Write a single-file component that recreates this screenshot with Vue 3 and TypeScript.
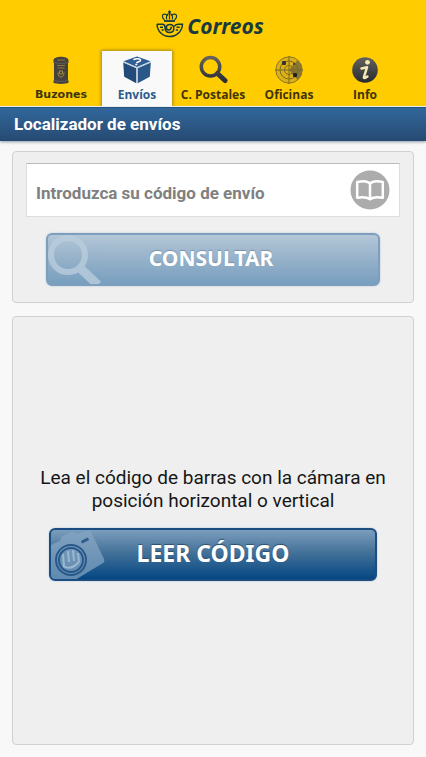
<script setup lang="ts">
import { ref } from 'vue'

type TabId = 'mailbox' | 'parcel' | 'search' | 'radar' | 'info'

interface Tab {
  id: TabId
  label: string
}

const tabs: Tab[] = [
  { id: 'mailbox', label: 'Buzones' },
  { id: 'parcel', label: 'Envíos' },
  { id: 'search', label: 'C. Postales' },
  { id: 'radar', label: 'Oficinas' },
  { id: 'info', label: 'Info' },
]

const activeTab = ref<TabId>('parcel')
const code = ref('')
</script>

<template>
  <div class="app">
    <header class="brand">
      <svg class="brand-mark" viewBox="0 0 28 28" aria-hidden="true" fill="none" stroke="#17393f">
        <path d="M13.5 0.5v3M12 1.8h3" stroke-width="1.3" />
        <path d="M8.500 10C4.800 6.500 6.500 3.800 9 4.200c1.800.2 2.500 1 2.800 1.800M18.500 10c3.700-3.500 2-6.200-.5-5.800-1.800.2-2.500 1-2.800 1.800M10.800 9.500C9.500 6 11.500 3.500 13.500 3.500s4 2.500 2.700 6M13.500 4v5.500" stroke-width="1.200" />
        <path d="M8 11h11" stroke-width="1.800" />
        <path d="M1 14.200h5.500c2 0 2.500 1.200 2.500 3 0 3.500 1.800 5.300 4.500 5.300 2.500 0 4.300-1.700 4.300-4s-1.600-3.900-3.900-3.900c-2.200 0-3.500 1.300-3.500 3s1 2.400 2.200 2.400c1.600 0 2.600-1.300 2.700-3.300" stroke-width="1.500" />
        <path d="M1 14.200C1.500 21.500 6.500 26.500 13.500 26.500S26 21.500 26.500 14.200H22c-2 0-3 .6-3.800 2.300M4 17.200h3M20.500 17.200h3.200M5.500 20h2.200M19.800 20H22" stroke-width="1.500" />
      </svg>
      <span class="brand-name">Correos</span>
    </header>

    <nav class="tabs" aria-label="Secciones">
      <button
        v-for="tab in tabs"
        :key="tab.id"
        type="button"
        class="tab"
        :class="[tab.id, { active: tab.id === activeTab }]"
        :aria-current="tab.id === activeTab ? 'page' : undefined"
        @click="activeTab = tab.id"
      >
        <svg class="tab-icon" viewBox="0 0 30 30" aria-hidden="true">
          <defs>
            <linearGradient id="ink" gradientUnits="userSpaceOnUse" x1="0" y1="2" x2="0" y2="28">
              <stop offset="0" stop-color="#66625c" />
              <stop offset="1" stop-color="#262a30" />
            </linearGradient>
          </defs>
          <g v-if="tab.id === 'mailbox'">
            <path d="M7.500 5C8 3 11.500 1.800 15 1.800S22 3 22.500 5v3h-.5v17l.5.8v2C20 29.300 10 29.300 7.500 27.800v-2l.5-.8V8h-.5z" fill="#44413e" />
            <path d="M8 7.500c3 1.300 11 1.300 14 0M8.200 25.500c3 1.200 10.600 1.200 13.600 0" fill="none" stroke="#5f5a54" stroke-width="1" />
            <path d="M11 5h8M11 10.500h8M11.500 13h7" stroke="#8a7838" stroke-width="1" />
            <path d="M12 17.500c0 3 1 4.500 3 4.500s3-1.500 3-4.500M13.500 16h3v3h-3z" fill="none" stroke="#a08a3c" stroke-width="1" />
          </g>
          <g v-else-if="tab.id === 'parcel'">
            <path d="M15 1.500 28.500 6.200 15 12 1.500 6.200z" fill="#2d5d91" />
            <path d="M1.200 7.500 14.300 13.200V28.300L2.200 21.800z" fill="#234a79" />
            <path d="M28.800 7.500 15.700 13.200V28.300L27.800 21.800z" fill="#285788" />
            <path d="M1.200 7.100 15 12.800 28.800 7.100" fill="none" stroke="#a9c0d8" stroke-width="0.800" />
            <path d="M11.500 4.800c2.500-1.800 7.500-1.200 7 .8-.4 1.400-3.600.8-4 2.600M13.300 9.600h2" fill="none" stroke="#fff" stroke-width="1.500" />
          </g>
          <g v-else-if="tab.id === 'search'" fill="none" stroke="url(#ink)">
            <circle cx="12.500" cy="11.800" r="9.200" stroke-width="3.500" />
            <path d="m19.500 18.500 7.500 7" stroke-width="5" stroke-linecap="round" />
          </g>
          <g v-else-if="tab.id === 'radar'">
            <circle cx="15" cy="15" r="13.200" fill="#dbb115" stroke="#8b752a" stroke-width="1" />
            <path d="M15 15 23.500 5A13 13 0 0 1 23.500 25z" fill="#8b7732" />
            <g fill="none" stroke="#7d6a24" stroke-width="1">
              <circle cx="15" cy="15" r="9" />
              <circle cx="15" cy="15" r="4.500" />
              <path d="M15 1v28M1 15h28" />
            </g>
            <rect x="8" y="6" width="4" height="4" rx="1" fill="#333" />
            <rect x="19" y="18" width="4" height="4" rx="1" fill="#222" />
            <circle cx="20" cy="9" r="1" fill="#333" />
          </g>
          <g v-else>
            <circle cx="15" cy="15" r="12.800" fill="url(#ink)" />
            <circle cx="17.500" cy="7.300" r="2.400" fill="#f5e8b8" />
            <path d="M11.500 13.500 17 12.300 13.800 22.500M17 12.300l-3.200 10.200c.3 1 1.800.3 3.600-1" fill="none" stroke="#f5e8b8" stroke-width="2.500" stroke-linecap="round" stroke-linejoin="round" />
          </g>
        </svg>
        <span>{{ tab.label }}</span>
      </button>
    </nav>

    <h1 class="title">Localizador de envíos</h1>

    <main class="content">
      <form class="panel lookup" @submit.prevent>
        <div class="field">
          <input v-model="code" type="text" aria-label="Código de envío" placeholder="Introduzca su código de envío" />
          <button type="button" class="book" aria-label="Mis códigos">
            <svg viewBox="0 0 40 40" aria-hidden="true">
              <circle cx="20" cy="20" r="19.500" fill="#acacac" />
              <path d="M20 13.500c-2.500-2.500-7.500-2.800-12.800-1.500v15.800c5-1 9.800-.8 12.800 1.500 3-2.300 7.800-2.500 12.800-1.500V12C27.500 10.700 22.500 11 20 13.500zV28" fill="none" stroke="#fff" stroke-width="2.500" stroke-linejoin="round" />
            </svg>
          </button>
        </div>
        <button type="submit" class="action muted">
          <svg class="action-icon" viewBox="0 0 54 50" aria-hidden="true" fill="none" stroke="#b9cddd" opacity="0.800">
            <circle cx="20" cy="20" r="17" stroke-width="6" />
            <path d="m32 33 18 17" stroke-width="9" />
          </svg>
          <span>CONSULTAR</span>
        </button>
      </form>

      <section class="panel scan">
        <p>Lea el código de barras con la cámara en posición horizontal o vertical</p>
        <button type="button" class="action">
          <svg class="action-icon" viewBox="0 0 54 50" aria-hidden="true">
            <path d="M0 15 9 11l2-5 10-4 5 2L36 1q3-1 4 1L53 29q1 3-1 4L24 50H0z" fill="#86a7c5" opacity="0.700" />
            <rect x="30" y="9" width="8" height="3" rx="1" transform="rotate(-25 34 10.500)" fill="#315f8d" />
            <g fill="none" stroke="#28588a" stroke-width="2">
              <circle cx="20" cy="30" r="15" />
              <circle cx="20" cy="30" r="12" />
            </g>
            <path d="m12 24 1 12m4-15 1 11m4-12 1 11m4-8 1 9M12 36q8 5 16-4" fill="none" stroke="#9bb8d1" stroke-width="2" />
          </svg>
          <span>LEER CÓDIGO</span>
        </button>
      </section>
    </main>
  </div>
</template>

<style>
body {
  background: #f8f8f8;
}
</style>

<style scoped>
.app {
  display: flex;
  flex-direction: column;
  min-height: 100vh;
  box-sizing: border-box;
  background: #f8f8f8;
  font-family: Roboto, sans-serif;
}

button {
  border: 0;
  padding: 0;
  background: none;
  cursor: pointer;
}

.brand {
  display: flex;
  justify-content: center;
  align-items: center;
  gap: 3px;
  height: 51px;
  padding-right: 6px;
  box-sizing: border-box;
  background: #fc0;
  color: #17393f;
}

.brand-mark {
  width: 28px;
  height: 28px;
  margin-bottom: 4px;
}

.brand-name {
  font: italic bold 21px/28px "Noto Sans", sans-serif;
}

.tabs {
  display: grid;
  grid-template-columns: repeat(5, 1fr);
  padding: 0 23px;
  background: #fc0;
  border-bottom: 1px solid #fff;
}

.tab {
  display: flex;
  flex-direction: column;
  align-items: center;
  height: 55px;
  padding-top: 4px;
  margin: 0 3px;
  color: #40340a;
  font: bold 12px/20px "Open Sans", sans-serif;
  white-space: nowrap;
}

.tab.mailbox {
  font-family: "DejaVu Sans", sans-serif;
  font-size: 11px;
}

.tab.active {
  background: #f9f9f9;
  color: #2c5c8f;
  box-shadow: 0 0 3px 1px #a88a18;
  clip-path: inset(-4px -4px 0 -4px);
}

.tab-icon {
  width: 30px;
  height: 30px;
}

.title {
  margin: 0;
  padding: 0 14px;
  border-top: 1px solid #24527f;
  background: linear-gradient(#31679b, #264a72);
  box-shadow: 0 1px 3px #8d98a5;
  color: #fff;
  font-size: 17px;
  line-height: 33px;
  font-weight: bold;
}

.content {
  display: flex;
  flex: 1;
  flex-direction: column;
  gap: 13px;
  padding: 10px 12px 12px;
}

.panel {
  display: flex;
  flex-direction: column;
  align-items: center;
  border: 1px solid #d0d0d0;
  border-radius: 4px;
  background: #efefef;
}

.lookup {
  gap: 16px;
  padding: 11px 13px 16px;
}

.field {
  display: flex;
  align-items: center;
  align-self: stretch;
  height: 54px;
  box-sizing: border-box;
  padding: 0 9px;
  border: 1px solid #ddd;
  border-top-color: #bbb;
  background: #fff;
}

.field input {
  flex: 1;
  min-width: 0;
  padding: 6px 0 0;
  border: 0;
  outline: 0;
  background: none;
  color: #333;
  font: bold 17px/24px Roboto, sans-serif;
}

.field input::placeholder {
  color: #808080;
  opacity: 1;
}

.book {
  width: 40px;
  height: 40px;
}

.book svg {
  display: block;
}

.action {
  position: relative;
  width: calc(100% - 72px);
  height: 53px;
  padding-bottom: 3px;
  overflow: hidden;
  border: 2px solid #1b4d80;
  border-radius: 6px;
  background: linear-gradient(#7c9dbd, #447299 45%, #054783);
  box-shadow: 0 0 2px #adc3d6;
  color: #fff;
  font: bold 23px/32px "Noto Sans", sans-serif;
  text-shadow: 0 -1px 1px #2d4d6c;
}

.action.muted {
  width: calc(100% - 40px);
  padding-right: 4px;
  border-color: #7d9fbd;
  background: linear-gradient(#b4c7d7, #98b3cb 45%, #779fbf);
  font-size: 21px;
  text-shadow: 0 -1px 1px #7892a8;
}

.action-icon {
  position: absolute;
  left: 0;
  top: 0;
  width: 54px;
  height: 50px;
}

.scan {
  flex: 1;
  justify-content: center;
  gap: 16px;
  padding: 0 0 14px;
}

.scan p {
  margin: 0;
  padding: 0 24px;
  color: #161616;
  font-size: 19px;
  line-height: 23px;
  text-align: center;
}
</style>
